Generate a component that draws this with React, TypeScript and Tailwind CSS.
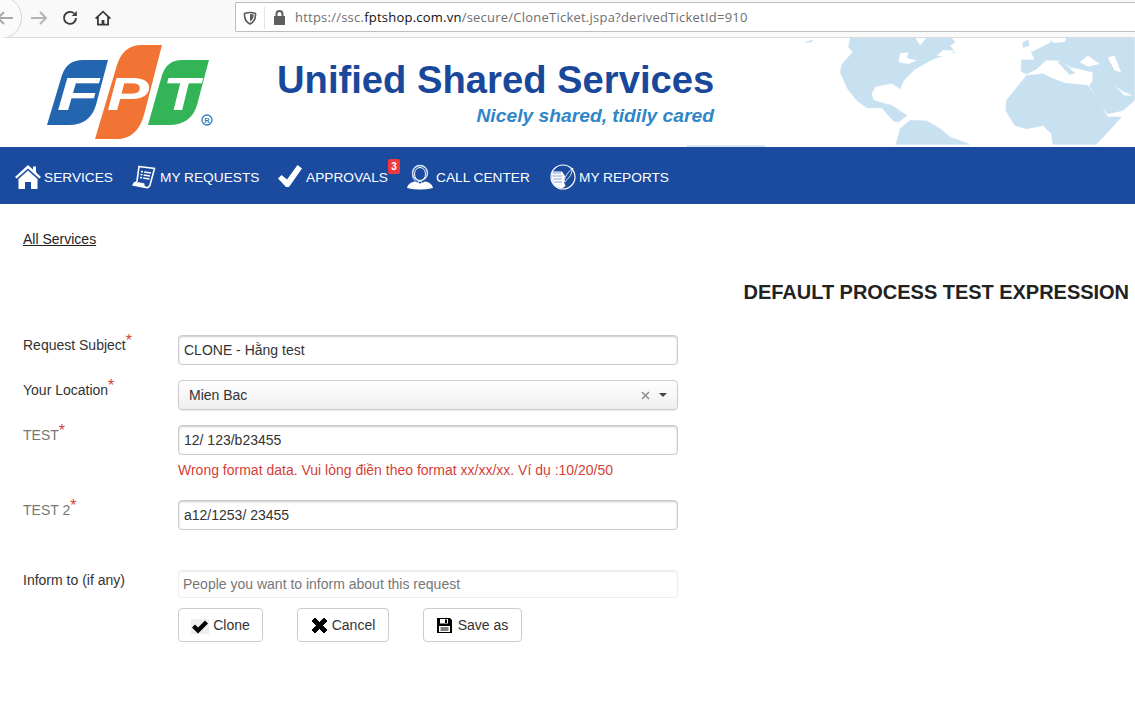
const navItems = [
    { label: "SERVICES", icon: <HomeIcon />, w: "w-[116px]" },
    { label: "MY REQUESTS", icon: <PaperIcon />, w: "w-[146px]" },
    { label: "APPROVALS", icon: <CheckIcon />, w: "w-[130px]" },
    { label: "CALL CENTER", icon: <HeadsetIcon />, w: "w-[143px]" },
    { label: "MY REPORTS", icon: <ReportIcon />, w: "w-auto" },
];

function HomeIcon() {
    return (
        <svg width="26" height="24" viewBox="0 0 26 24" fill="white">
            <path d="M13 0 L18 4.5 V1.5 H21 V7.3 L26 12 L24.3 13.6 L13 3.6 L1.7 13.6 L0 12 Z" />
            <path d="M13 5.6 L22.5 14 V24 H16 V17 H10 V24 H3.5 V14 Z" />
        </svg>
    );
}

function PaperIcon() {
    return (
        <svg width="24" height="24" viewBox="0 0 24 24" fill="none" stroke="white">
            <path d="M7 1.5 L22.5 3.5 L18 20 Q17 23 14 22.5 L1.5 20 Q4 19 5 16 Z" strokeWidth="1.6" fill="#1a4b9f" />
            <path d="M1.5 20 Q0.5 17.5 3 17 L12 18.5 Q12 21 14 22.5 Z" fill="white" strokeWidth="0.5" />
            <path d="M9 6.5 L19 8 M8.5 9.5 L18 11 M8 12.5 L17.5 14" strokeWidth="1.6" strokeDasharray="2 1.2 7 0" />
        </svg>
    );
}

function CheckIcon() {
    return (
        <svg width="24" height="22" viewBox="0 0 24 22" fill="white">
            <path d="M19.5 0 L24 3.5 L11 22 H8 L0 13.5 L3.5 10 L9 14.5 Z" />
        </svg>
    );
}

function HeadsetIcon() {
    return (
        <svg width="26" height="26" viewBox="0 0 26 26">
            <circle cx="13" cy="9" r="7.5" fill="#1a4b9f" stroke="#dbeafe" strokeWidth="1.4" />
            <ellipse cx="13" cy="10" rx="5.5" ry="6.5" fill="#1a4b9f" stroke="white" strokeWidth="1" />
            <path d="M0 24 Q1 18.5 8 17.5 Q13 21 18 17.5 Q25 18.5 26 24 Q13 27 0 24 Z" fill="white" />
            <path d="M5.5 11 Q6 18 12 18.5" fill="none" stroke="#bfdbfe" strokeWidth="1" />
            <circle cx="13" cy="18.5" r="1.6" fill="#1a4b9f" stroke="white" strokeWidth="1" />
        </svg>
    );
}

function ReportIcon() {
    return (
        <svg width="26" height="26" viewBox="0 0 26 26">
            <circle cx="13" cy="13" r="12" fill="#1a4b9f" stroke="white" strokeWidth="1.2" />
            <path d="M2 7.5 H12 L15 12 L14 18 L15.5 22 L12 24.5 Q2 23 1.5 13 Z" fill="white" />
            <path d="M2.5 9 H11 M2.5 12 H12 M3 15 H12 M4 18 H12" stroke="#7fa3d9" strokeWidth="1" />
            <path d="M14 17 Q16 9 23 4 Q22 12 15 18 Z" fill="none" stroke="white" strokeWidth="0.8" />
        </svg>
    );
}

function FptLetter({ x, w, c }: { x: number; w: number; c: string }) {
    return (
        <text x={x} y={65} fill="white" fontFamily="Liberation Sans" fontWeight="700" fontStyle="italic" fontSize="46" textLength={w} lengthAdjust="spacingAndGlyphs">
            {c}
        </text>
    );
}

function FptLogo() {
    return (
        <svg width="170" height="96" viewBox="0 0 170 96" className="ml-[47px] mt-[7px]">
            <path d="M0 80 L15 30 Q20 15 36 15 H61 L49 60 Q43 80 22 80 Z" fill="#2365ae" />
            <path d="M48 94 L70 20 Q76 0 95 0 H115 L97 70 Q90 94 70 94 Z" fill="#f27435" />
            <path d="M101 80 L115 30 Q120 15 135 15 H162 L150 60 Q144 80 122 80 Z" fill="#33b456" />
            <FptLetter x={10} w={42} c="F" />
            <FptLetter x={60} w={42} c="P" />
            <FptLetter x={116} w={36} c="T" />
            <circle cx="160" cy="75" r="5" fill="none" stroke="#2e7fc2" strokeWidth="1.3" />
            <text x="157.3" y="78" fontSize="7.5" fontWeight="700" fill="#2e7fc2" fontFamily="Liberation Sans">R</text>
        </svg>
    );
}

function WorldMap() {
    return (
        <svg viewBox="0 112 1125 322" className="absolute right-0 top-0 w-[375px] h-[107px]" fill="#c8e1f0" stroke="#c8e1f0" strokeLinejoin="round" strokeWidth="2">
            <path d="M270 112 L265 140 L278 155 L245 190 L240 215 L262 265 L290 300 L320 322 L365 322 L385 345 L400 362 L415 365 L440 345 L395 315 L375 310 L340 300 L333 280 L345 258 L395 248 L420 265 L430 240 L465 205 L520 175 L585 155 L570 135 L585 125 L575 112 H500 L480 135 L465 112 Z" />
            <path d="M408 432 L420 385 L450 360 L500 362 L540 385 L570 410 L628 432 Z" />
            <path d="M800 225 L740 300 L738 330 L765 375 L800 385 L850 375 L875 400 L880 432 L1010 432 L1045 395 L1085 350 L1045 350 L1030 325 L985 255 L915 248 L880 235 L850 220 Z" />
            <path d="M785 212 L785 178 L825 178 L815 155 L870 128 L880 112 H1125 V300 L1090 330 L1045 340 L1020 310 L990 255 L1000 240 L1000 215 L960 205 L935 200 L905 180 L860 178 L830 205 L800 220 Z" />
            <path d="M790 125 L805 118 L808 135 L790 140 Z M135 125 L158 118 L150 124 Z" />
            <path d="M905 178 L945 218 L930 222 L895 185 Z" />
            <g fill="white" stroke="none">
                <path d="M415 185 L420 158 L445 155 L440 172 L470 180 L445 190 Z M530 165 L550 148 L585 150 L560 170 Z M960 185 L985 165 L1020 190 L985 198 Z M1045 170 L1065 165 L1085 215 L1065 210 Z M1065 255 L1085 270 L1120 285 L1095 285 Z" />
                <path d="M400 295 L445 290 L450 300 L495 310 L440 312 Z" />
                <path d="M870 112 H920 L915 124 L880 126 Z" />
            </g>
        </svg>
    );
}

function Star() {
    return <sup className="text-[#d43f3a] text-[16px] leading-none top-[-4px]">*</sup>;
}

const inputCls =
    "block w-[500px] h-[30px] px-[5px] bg-white border border-[#ccc] rounded-[4px] shadow-[inset_0_1px_2px_rgba(0,0,0,0.22)] text-[14px] text-[#333] outline-none";

export default function App() {
    return (
        <div className="h-[702px] overflow-hidden bg-white font-['Liberation_Sans',Arial,sans-serif] text-[14px] text-[#333]">
            {/* browser toolbar */}
            <div className="h-[38px] pb-[2px] bg-[#f9f9fa] border-b border-[#dcdcdc] relative flex items-center">
                <div className="absolute left-[-21px] top-[-4px] w-[43px] h-[43px] rounded-full border border-[#d4d4d4] bg-[#fbfbfb]" />
                <svg width="18" height="16" viewBox="0 0 18 16" fill="none" stroke="#a8a8a8" strokeWidth="2" className="relative ml-[-4px]">
                    <path d="M17 8 H2 M8 2 L2 8 L8 14" />
                </svg>
                <svg width="18" height="16" viewBox="0 0 18 16" fill="none" stroke="#b4b4b4" strokeWidth="2" className="ml-[16px]">
                    <path d="M1 8 H16 M10 2 L16 8 L10 14" />
                </svg>
                <svg width="16" height="16" viewBox="0 0 16 16" fill="none" stroke="#3a3a3a" strokeWidth="1.9" className="ml-[14px]">
                    <path d="M14 8 A6 6 0 1 1 12 3.4" />
                    <path d="M14.8 1 V6 H9.8 Z" fill="#3a3a3a" stroke="none" />
                </svg>
                <svg width="16" height="16" viewBox="0 0 16 16" fill="#3a3a3a" className="ml-[17px]">
                    <path d="M8 .5 L16 8 L14.8 9.2 L14 8.5 V15.5 H2 V8.5 L1.2 9.2 L0 8 Z M8 2.8 L3.8 6.8 V13.8 H6.6 V10 H9.4 V13.8 H12.2 V6.8 Z" />
                </svg>
                <div className="ml-[124px] self-start mt-[2px] flex-1 h-[30px] pt-[1px] bg-white border border-[#bdbdbd] border-r-0 rounded-l-[2px] flex items-center">
                    <svg width="14" height="14" viewBox="0 0 14 14" className="ml-[7px]" fill="none" stroke="#5a5a5a" strokeWidth="1.6">
                        <path d="M1.5 2.5 Q7 .5 12.5 2.5 Q13 10 7 13 Q1 10 1.5 2.5 Z" />
                        <path d="M7 3 Q10 3 10.8 3.8 Q10.5 8.5 7 10.6 Z" fill="#5a5a5a" stroke="none" />
                    </svg>
                    <div className="w-px h-[22px] bg-[#e2e2e2] ml-[7px]" />
                    <svg width="13" height="15" viewBox="0 0 13 15" className="ml-[8px]" fill="#5f5f5f">
                        <path d="M1 6 H2.5 V4 A4 4 0 0 1 10.5 4 V6 H12 V15 H1 Z M4.5 6 H8.5 V4 A2 2 0 0 0 4.5 4 Z" />
                    </svg>
                    <div className="ml-[9px] text-[13px] tracking-[0.23px] text-[#6f6f6f] whitespace-nowrap font-['Open_Sans',sans-serif]">
                        https://ssc.<span className="text-[#111]">fptshop.com.vn</span>/secure/CloneTicket.jspa?derivedTicketId=910
                    </div>
                </div>
            </div>

            {/* banner */}
            <div className="h-[109px] relative flex bg-white">
                <WorldMap />
                <FptLogo />
                <div className="ml-[60px] mt-[20px] w-[437px] text-right">
                    <div className="text-[38.2px] leading-[44px] font-bold text-[#19489b] whitespace-nowrap">Unified Shared Services</div>
                    <div className="text-[19.25px] leading-[24px] mt-[2px] font-bold italic text-[#2f86c8] whitespace-nowrap">Nicely shared, tidily cared</div>
                </div>
                <div className="absolute left-[687px] bottom-0 w-[78px] h-[2px] bg-[#d8e6f2]" />
            </div>

            {/* nav */}
            <div className="h-[57px] pt-[5px] bg-[#1a4b9f] flex items-center pl-[15px] text-white text-[13.7px]">
                {navItems.map((item) => (
                    <div key={item.label} className={`${item.w} relative flex items-center gap-[3px] shrink-0`}>
                        <span className="w-[26px] flex justify-center mt-[-3px]">{item.icon}</span>
                        <span className="whitespace-nowrap">{item.label}</span>
                        {item.label === "APPROVALS" && (
                            <span className="absolute left-[111px] top-[-9px] w-[12px] h-[15px] rounded-[2px] bg-[#f0393f] text-[10px] leading-[15px] font-bold text-center">3</span>
                        )}
                    </div>
                ))}
            </div>

            {/* content */}
            <div className="pl-[23px] pr-[6px]">
                <div className="pt-[25px] h-[76px]">
                    <a className="underline text-[#222]">All Services</a>
                </div>
                <h1 className="text-right text-[20px] leading-[24px] font-bold text-[#222] tracking-[-0.03px]">DEFAULT PROCESS TEST EXPRESSION</h1>

                <div className="mt-[31px] flex flex-col">
                    <div className="flex h-[45px]">
                        <label className="w-[155px]">Request Subject<Star /></label>
                        <input className={inputCls} defaultValue="CLONE - Hằng test" />
                    </div>
                    <div className="flex h-[45px]">
                        <label className="w-[155px]">Your Location<Star /></label>
                        <div className="w-[500px] h-[30px] pl-[10px] pr-[10px] flex items-center border border-[#ccc] rounded-[4px] bg-gradient-to-b from-white to-[#efefef] shadow-[0_1px_1px_rgba(0,0,0,0.08)]">
                            <span className="flex-1">Mien Bac</span>
                            <svg width="9" height="9" viewBox="0 0 9 9" stroke="#8c8c8c" strokeWidth="1.5">
                                <path d="M1 1 L8 8 M8 1 L1 8" />
                            </svg>
                            <span className="ml-[9px] w-0 h-0 border-x-[4px] border-x-transparent border-t-[4px] border-t-[#444]" />
                        </div>
                    </div>
                    <div className="flex h-[75px]">
                        <label className="w-[155px] text-[#777]">TEST<Star /></label>
                        <div>
                            <input className={inputCls} defaultValue="12/ 123/b23455" />
                            <div className="mt-[6px] text-[#d43f3a] leading-[18px]">Wrong format data. Vui lòng điền theo format xx/xx/xx. Ví dụ :10/20/50</div>
                        </div>
                    </div>
                    <div className="flex h-[70px]">
                        <label className="w-[155px] text-[#777]">TEST 2<Star /></label>
                        <input className={inputCls} defaultValue="a12/1253/ 23455" />
                    </div>
                    <div className="flex">
                        <label className="w-[155px]">Inform to (if any)</label>
                        <div>
                            <input
                                className="block w-[500px] h-[28px] px-[4px] bg-white border border-[#eee] rounded-[4px] shadow-[inset_0_1px_1px_rgba(0,0,0,0.08)] text-[14px] outline-none placeholder:text-[#777]"
                                placeholder="People you want to inform about this request"
                            />
                            <div className="mt-[10px] flex">
                                <button className="w-[85px] h-[34px] flex items-center justify-center gap-[4px] border border-[#ccc] rounded-[4px] bg-white">
                                    <svg width="18" height="15" viewBox="0 0 18 15" className="bg-[#eee] mt-[2px]" fill="black">
                                        <path d="M1 8.5 L4 5.5 L7 8.5 L14 1.5 L17 4.5 L7 14.5 Z" />
                                    </svg>
                                    <span>Clone</span>
                                </button>
                                <button className="ml-[34px] w-[92px] h-[34px] flex items-center justify-center gap-[4px] border border-[#ccc] rounded-[4px] bg-white">
                                    <svg width="17" height="17" viewBox="0 0 17 17" fill="black" stroke="black" strokeLinejoin="round">
                                        <path d="M4 1 L8.5 5.5 L13 1 L16 4 L11.5 8.5 L16 13 L13 16 L8.5 11.5 L4 16 L1 13 L5.5 8.5 L1 4 Z" />
                                    </svg>
                                    <span>Cancel</span>
                                </button>
                                <button className="ml-[34px] w-[99px] h-[34px] flex items-center justify-center gap-[6px] border border-[#ccc] rounded-[4px] bg-white">
                                    <svg width="15" height="15" viewBox="0 0 15 15" fill="black">
                                        <path fillRule="evenodd" d="M0 0 H13 L15 2 V15 H0 Z M3 1 V5.5 H11 V1 Z M8 1.6 V4.9 H10 V1.6 Z M2 8 V14 H13 V8 Z" />
                                        <path d="M3.5 9.5 H11.5 V10.5 H3.5 Z M3.5 11.5 H11.5 V12.5 H3.5 Z" />
                                    </svg>
                                    <span>Save as</span>
                                </button>
                            </div>
                        </div>
                    </div>
                </div>
            </div>
        </div>
    );
}
